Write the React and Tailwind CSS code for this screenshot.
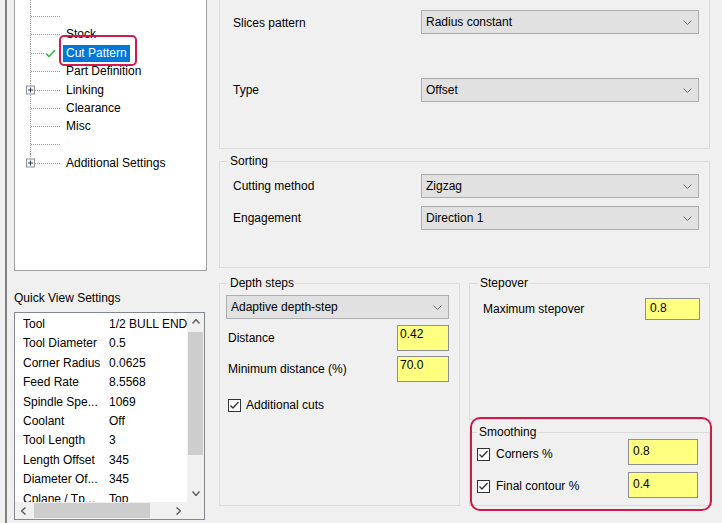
import React from "react";

const FONT = "font-['Liberation_Sans',Arial,sans-serif]";

function Chevron({ dir = "down", color = "#6a6a6a", w = 9, h = 5, sw = 1 }) {
  const d =
    dir === "down"
      ? `M0.5 0.5 L${w / 2} ${h - 0.5} L${w - 0.5} 0.5`
      : dir === "up"
      ? `M0.5 ${h - 0.5} L${w / 2} 0.5 L${w - 0.5} ${h - 0.5}`
      : dir === "left"
      ? `M${w - 0.5} 0.5 L0.5 ${h / 2} L${w - 0.5} ${h - 0.5}`
      : `M0.5 0.5 L${w - 0.5} ${h / 2} L0.5 ${h - 0.5}`;
  return (
    <svg width={w} height={h} className="shrink-0">
      <path d={d} fill="none" stroke={color} strokeWidth={sw} />
    </svg>
  );
}

function Dropdown({ text, cls }) {
  return (
    <div
      className={`flex items-center justify-between h-[24px] border border-[#adadad] bg-[#e1e1e1] pl-[4px] pr-[6px] ${cls}`}
    >
      <span>{text}</span>
      <Chevron />
    </div>
  );
}

function Field({ value, cls }) {
  return (
    <div className={`border border-[#8f8f8f] bg-[#ffff80] leading-[14px] ${cls}`}>
      {value}
    </div>
  );
}

function Check() {
  return (
    <svg width="13" height="13" className="shrink-0">
      <rect x="0.5" y="0.5" width="12" height="12" fill="#ffffff" stroke="#333333" />
      <path d="M2.5 6.5 L5 9 L10.5 3" fill="none" stroke="#333333" strokeWidth="1.3" />
    </svg>
  );
}

const treeRows = [
  { label: "", h: "h-[18px]", H: 18 },
  { label: "Stock", h: "h-[19px]", H: 19 },
  { label: "Cut Pattern", h: "h-[18px]", H: 18, check: true, selected: true },
  { label: "Part Definition", h: "h-[19px]", H: 19 },
  { label: "Linking", h: "h-[18px]", H: 18, plus: true },
  { label: "Clearance", h: "h-[18px]", H: 18 },
  { label: "Misc", h: "h-[18px]", H: 18 },
  { label: "", h: "h-[19px]", H: 19 },
  { label: "Additional Settings", h: "h-[18px]", H: 18, plus: true, last: true },
];

function TreeRow({ row }) {
  const { label, h, H, plus, check, selected, last } = row;
  const cy = Math.floor(H / 2) + 0.5;
  return (
    <div className={`flex items-center ${h}`}>
      <svg width="48" height={H} className="shrink-0">
        <line x1="15.5" y1="0" x2="15.5" y2={last ? cy : H} stroke="#9a9a9a" strokeDasharray="1 1" />
        <line x1={plus ? 20 : 16} y1={cy} x2={check ? 29 : 46} y2={cy} stroke="#9a9a9a" strokeDasharray="1 1" />
        {plus && (
          <g>
            <rect x="11.5" y={cy - 4.5} width="8" height="8" fill="#f6f6f6" stroke="#919191" />
            <line x1="13" y1={cy - 0.5} x2="18" y2={cy - 0.5} stroke="#2d3f62" />
            <line x1="15.5" y1={cy - 3} x2="15.5" y2={cy + 2} stroke="#2d3f62" />
          </g>
        )}
        {check && (
          <path
            d={`M31 ${cy} L34 ${cy + 3} L40 ${cy - 3.5}`}
            fill="none"
            stroke="#35b535"
            strokeWidth="1.5"
          />
        )}
      </svg>
      {label &&
        (selected ? (
          <span className="relative h-[17px] leading-[17px] px-[3px] bg-[#0078d7] text-white">
            {label}
            <span className="absolute left-[-4px] right-[-7px] top-[-10px] bottom-[-4px] border-2 border-[#d2194b] rounded-[5px]" />
          </span>
        ) : (
          <span className="px-[3px] leading-[17px]">{label}</span>
        ))}
    </div>
  );
}

const qv = [
  ["Tool", "1/2 BULL ENDMILL"],
  ["Tool Diameter", "0.5"],
  ["Corner Radius", "0.0625"],
  ["Feed Rate", "8.5568"],
  ["Spindle Spe...", "1069"],
  ["Coolant", "Off"],
  ["Tool Length", "3"],
  ["Length Offset", "345"],
  ["Diameter Of...", "345"],
  ["Cplane / Tp...", "Top"],
];

function Legend({ children, cls = "ml-[8px]" }) {
  return <legend className={`px-[2px] leading-[14px] ${cls}`}>{children}</legend>;
}

export default function App() {
  return (
    <div className={`w-[722px] h-[523px] bg-[#f0f0f0] flex overflow-hidden text-[12px] leading-[14px] text-black ${FONT}`}>
      {/* left edge */}
      <div className="w-[5px] shrink-0" />
      <div className="w-[2px] shrink-0 bg-[#7f7f7f]" />
      <div className="w-[7px] shrink-0" />

      {/* left column */}
      <div className="w-[193px] shrink-0 flex flex-col">
        <div className="h-[271px] border border-t-0 border-[#a0a0a0] bg-white">
          <div className="h-[7px]">
            <svg width="48" height="7">
              <line x1="15.5" y1="0" x2="15.5" y2="7" stroke="#9a9a9a" strokeDasharray="1 1" />
            </svg>
          </div>
          {treeRows.map((r, i) => (
            <TreeRow key={i} row={r} />
          ))}
        </div>

        <div className="mt-[20px] leading-[14px]">Quick View Settings</div>

        <div className="mt-[7px] w-[191px] h-[208px] border border-[#828790] bg-white flex flex-col">
          <div className="flex flex-1 min-h-0">
            <div className="flex-1 min-w-0 overflow-hidden pt-[1.3px]">
              {qv.map(([k, v], i) => (
                <div key={i} className="h-[19.4px] flex items-center whitespace-nowrap">
                  <span className="w-[94px] shrink-0 pl-[8px]">{k}</span>
                  <span>{v}</span>
                </div>
              ))}
            </div>
            <div className="w-[17px] shrink-0 bg-[#f0f0f0] flex flex-col items-center">
              <div className="h-[17px] w-full flex items-center justify-center">
                <Chevron dir="up" color="#606060" w={8} h={5} sw={1.5} />
              </div>
              <div className="mt-[2px] h-[123px] w-[15px] bg-[#cdcdcd]" />
              <div className="flex-1" />
              <div className="h-[17px] w-full flex items-center justify-center">
                <Chevron dir="down" color="#606060" w={8} h={5} sw={1.5} />
              </div>
            </div>
          </div>
          <div className="h-[17px] shrink-0 flex bg-[#f0f0f0]">
            <div className="w-[17px] flex items-center justify-center">
              <Chevron dir="left" color="#606060" w={5} h={8} sw={1.5} />
            </div>
            <div className="ml-[2px] my-[1px] w-[116px] bg-[#cdcdcd]" />
            <div className="flex-1" />
            <div className="w-[17px] flex items-center justify-center">
              <Chevron dir="right" color="#606060" w={5} h={8} sw={1.5} />
            </div>
            <div className="w-[17px]" />
          </div>
        </div>
      </div>

      <div className="w-[12px] shrink-0" />

      {/* right column */}
      <div className="w-[491px] shrink-0 flex flex-col">
        {/* top group (cut off) */}
        <div className="h-[149px] border border-t-0 border-[#dcdcdc] pt-[10px] pr-[10px]">
          <div className="flex items-center">
            <span className="w-[201px] pl-[13px] pt-[2px]">Slices pattern</span>
            <Dropdown text="Radius constant" cls="w-[278px]" />
          </div>
          <div className="flex items-center mt-[44px]">
            <span className="w-[201px] pl-[13px]">Type</span>
            <Dropdown text="Offset" cls="w-[278px]" />
          </div>
        </div>

        {/* sorting */}
        <fieldset className="mt-[5px] h-[114px] border border-[#dcdcdc] pr-[10px]">
          <Legend>Sorting</Legend>
          <div className="flex items-center mt-[6px]">
            <span className="w-[201px] pl-[13px]">Cutting method</span>
            <Dropdown text="Zigzag" cls="w-[278px]" />
          </div>
          <div className="flex items-center mt-[8px]">
            <span className="w-[201px] pl-[13px]">Engagement</span>
            <Dropdown text="Direction 1" cls="w-[278px]" />
          </div>
        </fieldset>

        {/* bottom row */}
        <div className="mt-[8px] flex gap-[9px] items-start">
          <fieldset className="w-[241px] h-[230px] border border-[#dcdcdc] pl-[6px] pr-[10px]">
            <Legend cls="ml-[2px]">Depth steps</Legend>
            <Dropdown text="Adaptive depth-step" cls="mt-[5px] w-[223px]" />
            <div className="flex items-center justify-between mt-[6px]">
              <span className="pl-[2px]">Distance</span>
              <Field value="0.42" cls="w-[52px] h-[26px] pl-[2px] pt-[1px]" />
            </div>
            <div className="flex items-center justify-between mt-[5px]">
              <span className="pl-[2px]">Minimum distance (%)</span>
              <Field value="70.0" cls="w-[52px] h-[26px] pl-[2px] pt-[1px]" />
            </div>
            <div className="flex items-center mt-[16px] pl-[2px] gap-[5px]">
              <Check />
              <span>Additional cuts</span>
            </div>
          </fieldset>

          <div className="w-[241px] flex flex-col">
            <fieldset className="h-[144px] border border-[#dcdcdc] pl-[13px] pr-[9px]">
              <Legend cls="ml-[-5px]">Stepover</Legend>
              <div className="flex items-center justify-between mt-[8px]">
                <span>Maximum stepover</span>
                <Field value="0.8" cls="w-[55px] h-[22px] pl-[4px] pt-[2px]" />
              </div>
            </fieldset>

            <div className="relative mt-[5px]">
              <fieldset className="h-[81px] border border-[#dcdcdc] pl-[7px] pr-[11px]">
                <Legend cls="ml-[0px]">Smoothing</Legend>
                <div className="flex items-center justify-between">
                  <div className="flex items-center gap-[6px] mt-[4px]">
                    <Check />
                    <span>Corners %</span>
                  </div>
                  <Field value="0.8" cls="w-[70px] h-[26px] pl-[4px] pt-[4px]" />
                </div>
                <div className="flex items-center justify-between mt-[7px]">
                  <div className="flex items-center gap-[6px] mt-[2px]">
                    <Check />
                    <span>Final contour %</span>
                  </div>
                  <Field value="0.4" cls="w-[70px] h-[26px] pl-[4px] pt-[4px]" />
                </div>
              </fieldset>
              <div className="absolute left-[1px] right-[-2px] top-[-8px] bottom-[-5px] border-2 border-[#d2194b] rounded-[10px] pointer-events-none" />
            </div>
          </div>
        </div>
      </div>
    </div>
  );
}
